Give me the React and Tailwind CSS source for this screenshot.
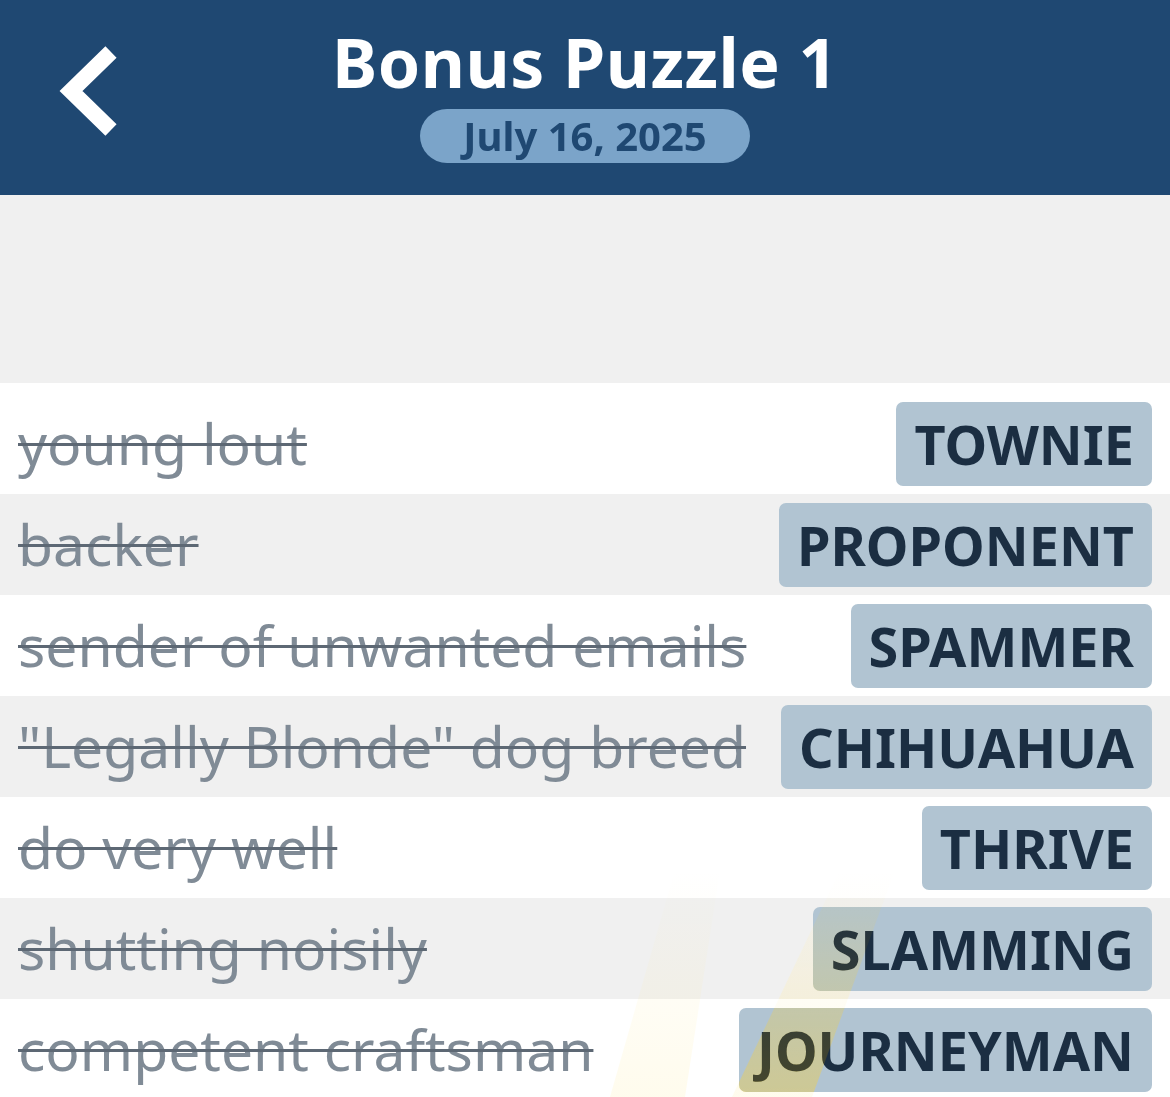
const ROWS = [
  { clue: 'young lout', answer: 'TOWNIE' },
  { clue: 'backer', answer: 'PROPONENT' },
  { clue: 'sender of unwanted emails', answer: 'SPAMMER' },
  { clue: '"Legally Blonde" dog breed', answer: 'CHIHUAHUA' },
  { clue: 'do very well', answer: 'THRIVE' },
  { clue: 'shutting noisily', answer: 'SLAMMING' },
  { clue: 'competent craftsman', answer: 'JOURNEYMAN' }
]

function BackChevron() {
  return (
    <svg width="70" height="100" viewBox="0 0 70 100">
      <polyline points="52,8 12,47 52,86" fill="none" stroke="white" strokeWidth="16" strokeLinejoin="miter" strokeMiterlimit="4" />
    </svg>
  )
}

export default function App() {
  return (
    <div className="relative w-[1170px] h-[1097px] overflow-hidden bg-white font-['Noto_Sans',sans-serif]">
      <header className="relative h-[195px] bg-[#1f4872] flex flex-col items-center pt-[20px]">
        <button className="absolute left-[59px] top-[44px]">
          <BackChevron />
        </button>
        <h1 className="text-white font-bold text-[68px] leading-[84px] tracking-[0.5px]">Bonus Puzzle 1</h1>
        <div className="mt-[5px] w-[330px] h-[54px] rounded-full bg-[#7ba4c9] flex items-center justify-center">
          <span className="text-[#1f4872] font-bold text-[40px] leading-none">July 16, 2025</span>
        </div>
      </header>

      <div className="h-[188px] bg-[#f0f0f0]" />

      <div className="pt-[10px]">
        {ROWS.map((r, i) => (
          <div
            key={r.answer}
            className={`h-[101px] flex items-center justify-between pl-[18px] pr-[18px] ${i % 2 ? 'bg-[#f0f0f0]' : 'bg-white'}`}
          >
            <span className="text-[#808b96] text-[57px] leading-none line-through decoration-[#5d6874] decoration-[3px] whitespace-nowrap">
              {r.clue}
            </span>
            <span className="h-[84px] px-[18px] rounded-[7px] bg-[#b1c4d2] flex items-center text-[#1b2e42] font-bold text-[54px] leading-none">
              {r.answer}
            </span>
          </div>
        ))}
      </div>

      {/* faint confetti light beams */}
      <svg className="absolute left-0 top-[850px] pointer-events-none" width="1170" height="247">
        <defs>
          <linearGradient id="beamFade" x1="0" y1="0" x2="0" y2="1">
            <stop offset="0" stopColor="#ffe680" stopOpacity="0" />
            <stop offset="1" stopColor="#ffe680" stopOpacity="0.14" />
          </linearGradient>
        </defs>
        <polygon points="675,20 720,20 685,247 610,247" fill="url(#beamFade)" />
        <polygon points="840,20 895,20 812,247 732,247" fill="url(#beamFade)" />
      </svg>
      <svg className="absolute left-0 top-[850px] pointer-events-none mix-blend-color" width="1170" height="247">
        <defs>
          <linearGradient id="beamTint" x1="0" y1="0" x2="0" y2="1">
            <stop offset="0" stopColor="#e0c040" stopOpacity="0" />
            <stop offset="0.6" stopColor="#e0c040" stopOpacity="0.25" />
            <stop offset="1" stopColor="#e0c040" stopOpacity="0.4" />
          </linearGradient>
        </defs>
        <polygon points="840,20 895,20 812,247 732,247" fill="url(#beamTint)" />
      </svg>
    </div>
  )
}
